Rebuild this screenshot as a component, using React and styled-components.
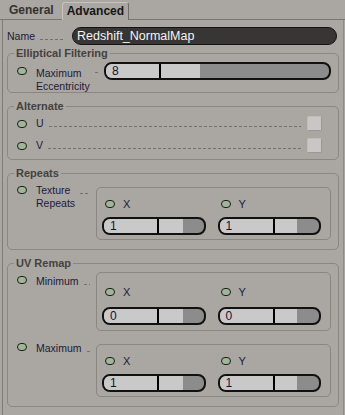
import React from 'react';
import styled, { createGlobalStyle } from 'styled-components';

const PANEL = '#aaa6a1';
const INK = '#1b1b3b';

const GlobalStyle = createGlobalStyle`
  html, body {
    margin: 0;
    padding: 0;
    background: ${PANEL};
  }
`;

export default function App() {
  return (
    <>
      <GlobalStyle />
      <Root>
        <TabBar>
          <Tab>General</Tab>
          <Tab $active>Advanced</Tab>
        </TabBar>

        <Panel>
          <NameRow>
            <LabelCell $width={65} $top={0}>
              <Label>Name</Label>
              <Leader $at={9} $mr={9} />
            </LabelCell>
            <NameField>Redshift_NormalMap</NameField>
          </NameRow>

          <Group $mt={8} $pb={0}>
            <GroupTitle>Elliptical Filtering</GroupTitle>
            <Row $mt={2}>
              <Led $top={5} />
              <LabelCell $width={68} $top={5}>
                <Label>
                  Maximum
                  <br />
                  Eccentricity
                </Label>
                <Leader $at={5} />
              </LabelCell>
              <Slider value="8" fill={23} />
            </Row>
          </Group>

          <Group $mt={13} $pb={6}>
            <GroupTitle>Alternate</GroupTitle>
            <Row $mt={3} $center>
              <Led />
              <LabelCell $grow>
                <Label>U</Label>
                <Leader $at={9} />
              </LabelCell>
              <Checkbox />
            </Row>
            <Row $mt={7} $center>
              <Led />
              <LabelCell $grow>
                <Label>V</Label>
                <Leader $at={9} />
              </LabelCell>
              <Checkbox />
            </Row>
          </Group>

          <Group $mt={13} $pb={9}>
            <GroupTitle>Repeats</GroupTitle>
            <Row $mt={3}>
              <Led $top={3} />
              <LabelCell $width={60} $top={1}>
                <Label>
                  Texture
                  <br />
                  Repeats
                </Label>
                <Leader $at={9} />
              </LabelCell>
              <XYBox $top={4} x="1" y="1" />
            </Row>
          </Group>

          <Group $mt={13} $pb={9}>
            <GroupTitle>UV Remap</GroupTitle>
            <Row $mt={2}>
              <Led $top={4} />
              <LabelCell $width={60} $top={3}>
                <Label>Minimum</Label>
                <Leader $at={9} />
              </LabelCell>
              <XYBox $top={0} x="0" y="0" loose />
            </Row>
            <Row $mt={11}>
              <Led $top={1} />
              <LabelCell $width={60} $top={0}>
                <Label>Maximum</Label>
                <Leader $at={9} />
              </LabelCell>
              <XYBox $top={2} x="1" y="1" />
            </Row>
          </Group>
        </Panel>
      </Root>
    </>
  );
}

function Slider({ value, fill }) {
  return (
    <SliderFrame>
      <SliderValue>{value}</SliderValue>
      <SliderTrack>
        <SliderFill style={{ width: `${fill}%` }} />
      </SliderTrack>
    </SliderFrame>
  );
}

function XYBox({ $top, x, y, loose }) {
  return (
    <InnerBox $top={$top} $loose={loose}>
      <Column>
        <SubHead $loose={loose}>
          <Led $mr={8} />
          <Letter>X</Letter>
        </SubHead>
        <SliderSlot $loose={loose}>
          <Slider value={x} fill={53} />
        </SliderSlot>
      </Column>
      <Column>
        <SubHead $loose={loose}>
          <Led $mr={8} />
          <Letter>Y</Letter>
        </SubHead>
        <SliderSlot $loose={loose}>
          <Slider value={y} fill={51} />
        </SliderSlot>
      </Column>
    </InnerBox>
  );
}

const Root = styled.div`
  width: 345px;
  height: 415px;
  background: ${PANEL};
  display: flex;
  flex-direction: column;
  overflow: hidden;
  font-family: 'Liberation Sans', Arial, sans-serif;
`;

const TabBar = styled.div`
  height: 20px;
  box-sizing: border-box;
  display: flex;
  align-items: flex-end;
  padding-left: 9px;
  border-bottom: 1px solid #7a7672;
`;

const Tab = styled.div`
  font-size: 12px;
  font-weight: bold;
  color: ${(p) => (p.$active ? '#161616' : '#34322f')};
  line-height: ${(p) => (p.$active ? '16px' : '17px')};
  white-space: nowrap;
  ${(p) =>
    p.$active
      ? `
    background: ${PANEL};
    border: 1px solid #c6c2bd;
    border-right-color: #6e6a66;
    border-bottom: none;
    border-radius: 3px 3px 0 0;
    padding: 0 4px 1px 4px;
    margin-bottom: -1px;
  `
      : `
    margin-right: 8px;
  `}
`;

const Panel = styled.div`
  flex: 1;
  margin: 0 1px 0 2px;
  padding: 7px 4px 0 4px;
  border-left: 1px solid #7f7b77;
  border-right: 1px solid #8e8a86;
`;

const NameRow = styled.div`
  display: flex;
  align-items: center;
  height: 18px;
`;

const NameField = styled.div`
  flex: 1;
  height: 18px;
  box-sizing: border-box;
  margin-right: 2px;
  padding-left: 4px;
  background: #383634;
  border: 1px solid #141414;
  border-radius: 9px;
  color: #f4f4f4;
  font-size: 12.5px;
  line-height: 16px;
`;

const Group = styled.section`
  margin-top: ${(p) => p.$mt}px;
  padding: 0 7px ${(p) => p.$pb}px 9px;
  border: 1px solid #8a8681;
  border-radius: 5px;
`;

const GroupTitle = styled.div`
  width: fit-content;
  margin: -8px 0 0 -3px;
  padding: 0 2px;
  background: ${PANEL};
  color: #45423e;
  font-size: 11px;
  font-weight: bold;
  line-height: 14px;
  white-space: nowrap;
`;

const Row = styled.div`
  display: flex;
  align-items: ${(p) => (p.$center ? 'center' : 'flex-start')};
  margin-top: ${(p) => p.$mt}px;
`;

const Led = styled.span`
  flex-shrink: 0;
  width: 10px;
  height: 8px;
  box-sizing: border-box;
  margin-top: ${(p) => p.$top || 0}px;
  margin-right: ${(p) => (p.$mr == null ? 9 : p.$mr)}px;
  border: 1px solid #1d1d1d;
  border-radius: 4px;
  background: #a0b796;
`;

const LabelCell = styled.div`
  display: flex;
  align-items: flex-start;
  flex: ${(p) => (p.$grow ? '1' : `0 0 ${p.$width}px`)};
  margin-top: ${(p) => p.$top || 0}px;
`;

const Label = styled.span`
  color: ${INK};
  font-size: 10.5px;
  line-height: 12.5px;
  white-space: nowrap;
`;

const Leader = styled.span`
  flex: 1;
  height: 1px;
  margin: ${(p) => p.$at}px ${(p) => p.$mr || 6}px 0 5px;
  background-image: repeating-linear-gradient(
    to right,
    #74706b 0 3px,
    transparent 3px 5px
  );
`;

const Checkbox = styled.span`
  flex-shrink: 0;
  width: 15px;
  height: 15px;
  box-sizing: border-box;
  margin-right: 9px;
  background: #c9c7c5;
  border: 1px solid;
  border-color: #c0bcb8 #9b9793 #9b9793 #c0bcb8;
  border-radius: 2px;
`;

const SliderFrame = styled.div`
  flex: 1;
  display: flex;
  height: 18px;
  box-sizing: border-box;
  border: 2px solid #111;
  border-radius: 8px;
  overflow: hidden;
  background: #8c8c8c;
`;

const SliderValue = styled.div`
  flex: 0 0 55px;
  box-sizing: border-box;
  padding-left: 6px;
  background: #c9c9c9;
  border-right: 2px solid #000;
  color: #12123a;
  font-size: 12px;
  line-height: 14px;
`;

const SliderTrack = styled.div`
  flex: 1;
  display: flex;
`;

const SliderFill = styled.div`
  background: #c9c9c9;
`;

const InnerBox = styled.div`
  flex: 1;
  display: grid;
  grid-template-columns: 1fr 1fr;
  column-gap: 12px;
  margin-top: ${(p) => p.$top}px;
  padding: ${(p) => (p.$loose ? '3px 9px 5px 5px' : '0 9px 4px 5px')};
  border: 1px solid #8a8681;
  border-radius: 5px;
`;

const Column = styled.div`
  display: flex;
  flex-direction: column;
`;

const SubHead = styled.div`
  display: flex;
  align-items: center;
  height: 12px;
  margin-top: ${(p) => (p.$loose ? 10 : 10)}px;
  padding-left: 3px;
`;

const Letter = styled.span`
  color: ${INK};
  font-size: 11px;
`;

const SliderSlot = styled.div`
  display: flex;
  margin-top: ${(p) => (p.$loose ? 9 : 7)}px;
`;
